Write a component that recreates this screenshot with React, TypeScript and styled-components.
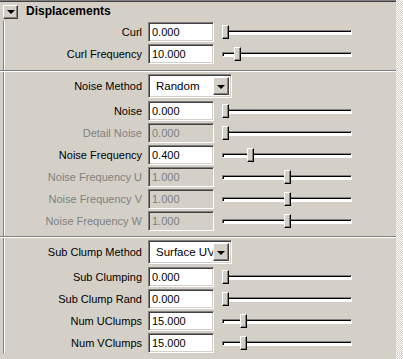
import React from "react";
import styled, { createGlobalStyle } from "styled-components";

const Global = createGlobalStyle`
  html, body { margin: 0; padding: 0; background: #d4d0c8; overflow: hidden; }
  body { font-family: "Liberation Sans", Arial, sans-serif; font-size: 11px; }
`;

const Frame = styled.div`
  width: 403px;
  height: 359px;
  display: flex;
  background: #d4d0c8;
`;

const Panel = styled.div`
  flex: 1;
  display: flex;
  flex-direction: column;
  border-top: 1px solid #808080;
  box-shadow: inset 0 1px #404040;
  padding-top: 1px;
`;

const ScrollStrip = styled.div`
  width: 7px;
  background-color: #ffffff;
  background-image: repeating-conic-gradient(#d4d0c8 0 25%, #ffffff 0 50%);
  background-size: 2px 2px;
`;

const Header = styled.div`
  height: 19px;
  display: flex;
  align-items: center;
  padding-left: 3px;
  gap: 8px;
`;

const CollapseButton = styled.div`
  width: 13px;
  height: 12px;
  border: 1px solid;
  border-color: #ffffff #404040 #404040 #ffffff;
  box-shadow: inset -1px -1px #808080;
  display: flex;
  align-items: center;
  justify-content: center;
  &::after {
    content: "";
    border-left: 4px solid transparent;
    border-right: 4px solid transparent;
    border-top: 4px solid #000;
    margin-top: 1px;
  }
`;

const Title = styled.div`
  font-weight: bold;
  font-size: 12px;
  color: #000;
  margin-top: -1px;
`;

const Section = styled.div<{ $top: number; $bottom: number }>`
  margin-left: 3px;
  border-left: 1px solid #808080;
  box-shadow: inset 1px 0 #ffffff;
  padding: ${(p) => p.$top}px 0 ${(p) => p.$bottom}px 1px;
  display: flex;
  flex-direction: column;
  gap: 2px;
`;

const Separator = styled.div`
  height: 1px;
  border-top: 1px solid #808080;
  background: #ffffff;
`;

const Row = styled.div<{ $h: number; $after?: number }>`
  height: ${(p) => p.$h}px;
  display: flex;
  align-items: center;
  margin-bottom: ${(p) => p.$after ?? 0}px;
`;

const Label = styled.div<{ $disabled?: boolean }>`
  width: 137px;
  margin-right: 6px;
  text-align: right;
  font-size: 11px;
  white-space: nowrap;
  color: ${(p) => (p.$disabled ? "#808080" : "#000")};
`;

const Field = styled.div<{ $disabled?: boolean }>`
  box-sizing: border-box;
  width: 66px;
  height: 20px;
  border: 1px solid;
  border-color: #808080 #ffffff #ffffff #808080;
  box-shadow: inset 1px 1px #404040, inset -1px -1px #d4d0c8;
  background: ${(p) => (p.$disabled ? "#d4d0c8" : "#ffffff")};
  color: ${(p) => (p.$disabled ? "#808080" : "#000")};
  font-size: 11px;
  padding: 0 3px;
  display: flex;
  align-items: center;
`;

const Dropdown = styled.div`
  box-sizing: border-box;
  width: 84px;
  height: 24px;
  border: 1px solid;
  border-color: #808080 #ffffff #ffffff #808080;
  box-shadow: inset 1px 1px #404040, inset -1px -1px #d4d0c8;
  background: #ffffff;
  display: flex;
  align-items: center;
  padding: 2px 2px 2px 7px;
  font-size: 11.5px;
  color: #000;
`;

const DropText = styled.span`
  flex: 1;
  min-width: 0;
  white-space: nowrap;
  overflow: hidden;
`;

const DropButton = styled.div`
  box-sizing: border-box;
  flex: none;
  width: 16px;
  height: 18px;
  background: #d4d0c8;
  border: 1px solid;
  border-color: #ffffff #404040 #404040 #ffffff;
  box-shadow: inset -1px -1px #808080;
  display: flex;
  align-items: center;
  justify-content: center;
  &::after {
    content: "";
    border-left: 4px solid transparent;
    border-right: 4px solid transparent;
    border-top: 4px solid #000;
    margin-top: 1px;
  }
`;

const Slider = styled.div`
  position: relative;
  margin-left: 8px;
  width: 130px;
  height: 14px;
  display: flex;
  align-items: center;
`;

const Track = styled.div`
  box-sizing: border-box;
  width: 100%;
  height: 5px;
  border: 1px solid;
  border-color: #808080 #ffffff #ffffff #808080;
  box-shadow: inset 1px 1px #000000;
  background: #ffffff;
`;

const Thumb = styled.div`
  position: absolute;
  top: 0;
  box-sizing: border-box;
  width: 7px;
  height: 14px;
  background: #d4d0c8;
  border: 1px solid;
  border-color: #ffffff #000000 #000000 #ffffff;
  box-shadow: inset -1px -1px #808080;
`;

type Item =
  | { kind: "num"; label: string; value: string; frac: number; disabled?: boolean }
  | { kind: "enum"; label: string; value: string };

const sections: { top: number; bottom: number; items: Item[] }[] = [
  {
    top: 1,
    bottom: 6,
    items: [
      { kind: "num", label: "Curl", value: "0.000", frac: 0 },
      { kind: "num", label: "Curl Frequency", value: "10.000", frac: 0.1 },
    ],
  },
  {
    top: 2,
    bottom: 5,
    items: [
      { kind: "enum", label: "Noise Method", value: "Random" },
      { kind: "num", label: "Noise", value: "0.000", frac: 0 },
      { kind: "num", label: "Detail Noise", value: "0.000", frac: 0, disabled: true },
      { kind: "num", label: "Noise Frequency", value: "0.400", frac: 0.2 },
      { kind: "num", label: "Noise Frequency U", value: "1.000", frac: 0.5, disabled: true },
      { kind: "num", label: "Noise Frequency V", value: "1.000", frac: 0.5, disabled: true },
      { kind: "num", label: "Noise Frequency W", value: "1.000", frac: 0.5, disabled: true },
    ],
  },
  {
    top: 2,
    bottom: 0,
    items: [
      { kind: "enum", label: "Sub Clump Method", value: "Surface UV" },
      { kind: "num", label: "Sub Clumping", value: "0.000", frac: 0 },
      { kind: "num", label: "Sub Clump Rand", value: "0.000", frac: 0 },
      { kind: "num", label: "Num UClumps", value: "15.000", frac: 0.15 },
      { kind: "num", label: "Num VClumps", value: "15.000", frac: 0.15 },
    ],
  },
];

const TRAVEL = 130 - 7;

function ItemRow({ item }: { item: Item }) {
  if (item.kind === "enum") {
    return (
      <Row $h={24} $after={1}>
        <Label>{item.label}</Label>
        <Dropdown>
          <DropText>{item.value}</DropText>
          <DropButton />
        </Dropdown>
      </Row>
    );
  }
  return (
    <Row $h={20}>
      <Label $disabled={item.disabled}>{item.label}</Label>
      <Field $disabled={item.disabled}>{item.value}</Field>
      <Slider>
        <Track />
        <Thumb style={{ left: Math.round(item.frac * TRAVEL) }} />
      </Slider>
    </Row>
  );
}

export default function App() {
  return (
    <>
      <Global />
      <Frame>
        <Panel>
          <Header>
            <CollapseButton />
            <Title>Displacements</Title>
          </Header>
          {sections.map((s, i) => (
            <React.Fragment key={i}>
              {i > 0 && <Separator />}
              <Section $top={s.top} $bottom={s.bottom}>
                {s.items.map((it) => (
                  <ItemRow key={it.label} item={it} />
                ))}
              </Section>
            </React.Fragment>
          ))}
        </Panel>
        <ScrollStrip />
      </Frame>
    </>
  );
}
